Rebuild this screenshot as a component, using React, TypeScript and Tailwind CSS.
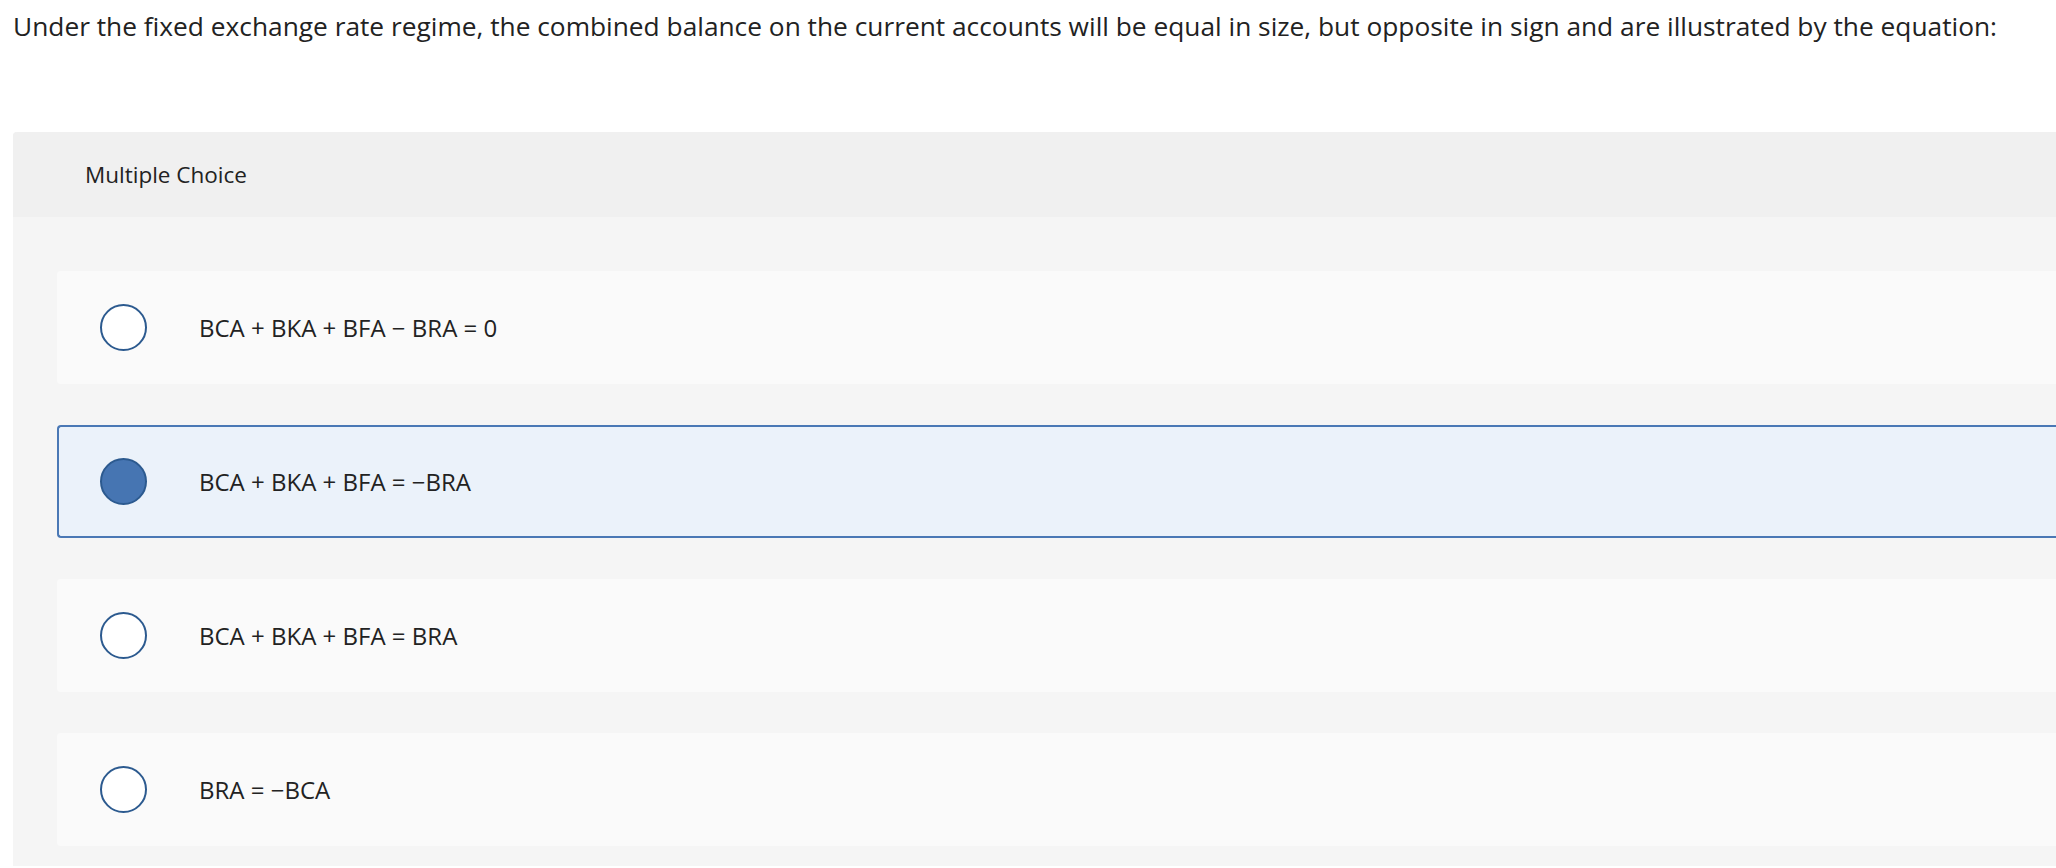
import React, { useState } from 'react'

const options = [
  'BCA + BKA + BFA \u2212 BRA = 0',
  'BCA + BKA + BFA = \u2212BRA',
  'BCA + BKA + BFA = BRA',
  'BRA = \u2212BCA',
]

function Radio({ checked }: { checked: boolean }) {
  return (
    <span
      className={`block w-[47px] h-[47px] shrink-0 rounded-full border-2 border-[#2c5a8f] ${
        checked ? 'bg-[#4675b2]' : 'bg-white'
      }`}
    />
  )
}

export default function App() {
  const [selected, setSelected] = useState(1)

  return (
    <div className="min-h-screen bg-white text-[#222] font-['Open_Sans',sans-serif]">
      <p className="pl-[13px] pt-[9px] text-[26.3px] leading-[34px]">
        Under the fixed exchange rate regime, the combined balance on the current accounts will be equal in size, but opposite in sign and are illustrated by the equation:
      </p>

      <div className="ml-[13px] mt-[89px] bg-[#f5f5f5] rounded-tl-[4px] pb-[20px]">
        {/* header */}
        <div className="h-[85px] flex items-center pl-[72px] bg-[#f0f0f0] rounded-tl-[4px] text-[22.5px]">
          Multiple Choice
        </div>

        {/* choices */}
        <div className="pl-[44px] pt-[54px] flex flex-col gap-[41px]">
          {options.map((opt, i) => {
            const isSel = selected === i
            return (
              <button
                key={i}
                onClick={() => setSelected(i)}
                className={`h-[113px] flex items-center text-left rounded-l-[4px] ${
                  isSel
                    ? 'bg-[#ebf2fa] border-2 border-r-0 border-[#4a78b5] pl-[41px]'
                    : 'bg-[#fafafa] pl-[43px]'
                }`}
              >
                <Radio checked={isSel} />
                <span className="ml-[52px] text-[24px]">{opt}</span>
              </button>
            )
          })}
        </div>
      </div>
    </div>
  )
}
